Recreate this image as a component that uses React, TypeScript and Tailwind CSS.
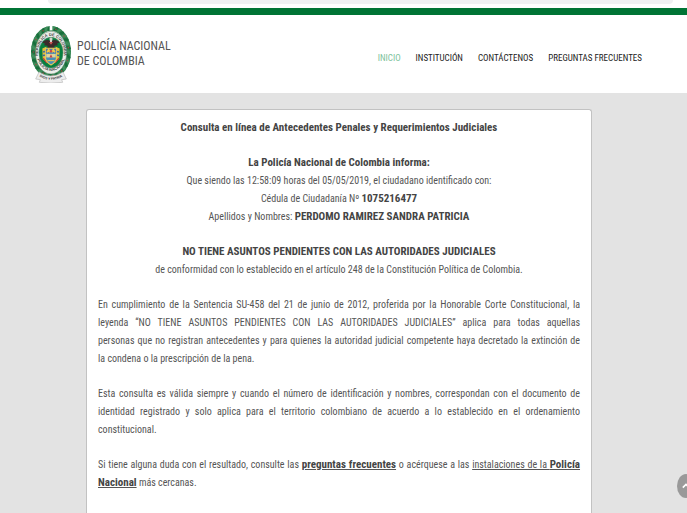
import React from "react";

const LEAVES = Array.from({ length: 34 }, (_, i) => i);

function Emblem() {
  return (
    <svg viewBox="0 0 120 171" className="h-[57px] w-10 shrink-0" preserveAspectRatio="none" role="img" aria-label="Escudo">
      <defs>
        <path id="ringTop" d="M22 96 A39 54 0 1 1 98 96" />
        <path id="ringBottom" d="M17 94 A45 58 0 0 0 103 94" />
        <path id="motto" d="M28 153 Q60 170 92 153" />
      </defs>
      <ellipse cx="60" cy="78" rx="53" ry="71" fill="#e9f0e9" stroke="#2f7f4e" strokeWidth="14" />
      {LEAVES.map((i) => {
        const a = ((i + 0.5) / 34) * Math.PI * 2;
        const x = 60 + 53 * Math.sin(a);
        const y = 78 - 71 * Math.cos(a);
        return (
          <g key={i}>
            <ellipse cx={x} cy={y} rx="4" ry="8" fill={i % 2 ? "#17703b" : "#3f8f5c"} transform={`rotate(${i * 10.6 + 40} ${x} ${y})`} />
            {i % 3 === 1 && <circle cx={x} cy={y} r="2.5" fill="#8c4f43" />}
          </g>
        );
      })}
      <path d="M56 0 H64 V13 H56Z" fill="#fff" />
      <ellipse cx="60" cy="80" rx="47" ry="64" fill="#eceeea" stroke="#4c7a5b" strokeWidth="1.5" />
      <ellipse cx="60" cy="80" rx="36" ry="46" fill="#07803f" stroke="#4f8a66" strokeWidth="2" />
      <g fontFamily="Liberation Sans, sans-serif" fontWeight="bold" fill="#3f4541">
        <text fontSize="12">
          <textPath href="#ringTop" startOffset="50%" textAnchor="middle">REPÚBLICA DE COLOMBIA</textPath>
        </text>
        <text fontSize="12">
          <textPath href="#ringBottom" startOffset="50%" textAnchor="middle">POLICÍA NACIONAL</textPath>
        </text>
      </g>
      <g transform="translate(60 79) scale(1.18) translate(-60 -76)">
        <path d="M60 48 C52 42 43 44 38 51 L45 54 L42 58 L51 59 L52 66 H68 L69 59 L78 58 L75 54 L82 51 C77 44 68 42 60 48Z" fill="#3b2b2b" />
        <path d="M56 41 Q60 36 64 41 L62 51 H58Z" fill="#d9d4cc" />
        <path d="M55 50 L60 57 L65 50Z" fill="#ce5350" />
        <path d="M38 66 L48 62 L51 104 L39 92Z M82 66 L72 62 L69 104 L81 92Z" fill="#e4bd3c" />
        <path d="M40 75 L48 73 M39 84 L49 83 M80 75 L72 73 M81 84 L71 83" stroke="#3566a0" strokeWidth="4" />
        <path d="M40 91 L50 103 M80 91 L70 103" stroke="#cb3942" strokeWidth="3" />
        <path d="M46 66 H74 V91 Q72 102 60 108 Q48 102 46 91Z" fill="#4a8fb8" stroke="#e3c95c" strokeWidth="3" />
        <path d="M47 67 H73 V78 H47Z" fill="#547bad" />
        <path d="M50 76 L54 69 L58 76 M70 76 L66 69 L62 76" stroke="#f2cb43" strokeWidth="4" fill="none" />
        <circle cx="60" cy="73" r="3" fill="#d64a43" />
        <path d="M48 80 H72 V89 H48Z" fill="#dfd49a" />
        <path d="M56 89 L60 81 L64 89Z" fill="#ca4544" />
        <path d="M51 97 H69" stroke="#e0c75a" strokeWidth="3" />
      </g>
      <path d="M24 138 Q60 162 96 138 L106 159 L92 161 L95 169 Q60 174 25 169 L28 161 L14 159Z" fill="#ededed" stroke="#b9b9b9" strokeWidth="2" />
      <text fontFamily="Liberation Sans, sans-serif" fontSize="10" fontWeight="bold" fill="#333">
        <textPath href="#motto" startOffset="50%" textAnchor="middle">DIOS Y PATRIA</textPath>
      </text>
    </svg>
  );
}

const NAV = ["INICIO", "INSTITUCIÓN", "CONTÁCTENOS", "PREGUNTAS FRECUENTES"];

function Strong({ children }: { children: React.ReactNode }) {
  return <b className="text-[11px] text-[#444]">{children}</b>;
}

export default function App() {
  return (
    <div className="flex h-screen flex-col overflow-hidden bg-[#e3e3e3] font-['Roboto_Condensed','Liberation_Sans',sans-serif] text-[#555]">
      <div className="h-2 shrink-0 bg-white pr-[14px] pl-12">
        <div className="h-1 rounded-b-full bg-[#f0f1f3]" />
      </div>
      <div className="h-[7px] shrink-0 bg-[#007435]" />
      <header className="flex h-[78px] shrink-0 items-center justify-between bg-white pr-[45px] pl-[31px]">
        <div className="flex items-center gap-[6px]">
          <Emblem />
          <p className="text-[12px] leading-[15px] whitespace-nowrap text-[#555]">
            POLICÍA NACIONAL
            <br />
            DE COLOMBIA
          </p>
        </div>
        <nav className="flex gap-[15px] pt-2 text-[9px] leading-4 whitespace-nowrap">
          {NAV.map((item, i) => (
            <a key={item} href="#" className={i === 0 ? "text-[#7cc29b]" : "text-[#222]"}>
              {item}
            </a>
          ))}
        </nav>
      </header>
      <main className="mr-[95px] ml-[86px] mt-4 flex flex-1 flex-col gap-[17px] rounded-t-[3px] border border-b-0 border-[#c2c2c2] bg-white px-[11px] pt-[9px] text-[10px] leading-[18px]">
        <h1 className="text-center text-[11px] font-bold text-[#444]">
          Consulta en línea de Antecedentes Penales y Requerimientos Judiciales
        </h1>
        <p className="text-center">
          <Strong>La Policía Nacional de Colombia informa:</Strong>
          <br />
          Que siendo las 12:58:09 horas del 05/05/2019, el ciudadano identificado con:
          <br />
          Cédula de Ciudadanía Nº <Strong>1075216477</Strong>
          <br />
          Apellidos y Nombres: <Strong>PERDOMO RAMIREZ SANDRA PATRICIA</Strong>
        </p>
        <p className="text-center">
          <Strong>NO TIENE ASUNTOS PENDIENTES CON LAS AUTORIDADES JUDICIALES</Strong>
          <br />
          de conformidad con lo establecido en el artículo 248 de la Constitución Política de Colombia.
        </p>
        <p className="text-justify">
          En cumplimiento de la Sentencia SU-458 del 21 de junio de 2012, proferida por la Honorable Corte Constitucional, la
          leyenda “NO TIENE ASUNTOS PENDIENTES CON LAS AUTORIDADES JUDICIALES” aplica para todas aquellas{" "}
          <span className="whitespace-nowrap">personas que no</span> registran antecedentes y para quienes la autoridad
          judicial competente haya decretado la extinción de <span className="whitespace-nowrap">la condena</span> o la
          prescripción de la pena.
        </p>
        <p className="text-justify">
          Esta consulta es válida siempre y cuando el número de identificación y nombres, correspondan con el documento de
          identidad registrado y solo aplica para el territorio colombiano de acuerdo a lo establecido en el ordenamiento
          constitucional.
        </p>
        <p className="text-justify">
          Si tiene alguna duda con el resultado, consulte las{" "}
          <a href="#" className="underline">
            <Strong>preguntas frecuentes</Strong>
          </a>{" "}
          o acérquese a las{" "}
          <a href="#" className="underline">
            instalaciones de la <Strong>Policía Nacional</Strong>
          </a>{" "}
          más cercanas.
        </p>
      </main>
      <button aria-label="Subir" className="absolute -right-2 bottom-[15px] flex h-6 w-[18px] items-center justify-center rounded-[50%] bg-[#999]">
        <svg viewBox="0 0 10 8" className="h-2 w-2" fill="none" stroke="#fff" strokeWidth="2">
          <path d="M1 6 L5 2 L9 6" />
        </svg>
      </button>
    </div>
  );
}
